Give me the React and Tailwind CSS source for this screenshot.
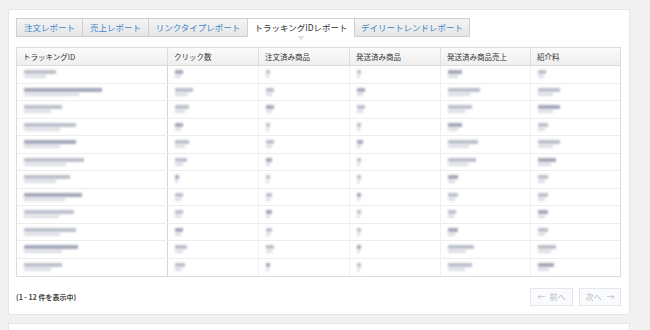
import React from 'react';

const tabs = [
  { label: '注文レポート', w: 'w-[67px]' },
  { label: '売上レポート', w: 'w-[67px]' },
  { label: 'リンクタイプレポート', w: 'w-[100px]' },
  { label: 'トラッキングIDレポート', w: 'w-[108px]', active: true },
  { label: 'デイリートレンドレポート', w: 'w-[116px]' },
];

const columns = ['トラッキングID', 'クリック数', '注文済み商品', '発送済み商品', '発送済み商品売上', '紹介料'];

// blurred widths for each row, one per column
const rows = [
  [32, 8, 4, 4, 14, 8],
  [78, 18, 8, 8, 32, 22],
  [38, 14, 8, 8, 24, 22],
  [52, 8, 4, 4, 14, 10],
  [52, 14, 8, 6, 30, 22],
  [60, 12, 6, 4, 28, 18],
  [46, 4, 4, 4, 10, 10],
  [58, 8, 6, 4, 10, 10],
  [50, 8, 6, 4, 8, 10],
  [52, 8, 6, 4, 10, 10],
  [54, 12, 8, 4, 26, 18],
  [38, 10, 4, 4, 24, 16],
];

const Smudge = ({ w, dark }) => (
  <div className="flex flex-col gap-[1px] blur-[1px]">
    <div
      className={dark ? 'h-[4px] bg-[#a3a7b8]' : 'h-[4px] bg-[#bcc0cb]'}
      style={{ width: w }}
    />
    <div className="h-[3px] bg-[#dcdee5]" style={{ width: Math.max(3, w * 0.7) }} />
  </div>
);

const App = () => {
  return (
    <div
      className="w-[650px] h-[330px] bg-[#f1f1f1] overflow-hidden pt-[9px] pl-[8px]"
      style={{ fontFamily: '"Noto Sans CJK JP", "Liberation Sans", sans-serif' }}
    >
      <div className="w-[622px] h-[306px] bg-white border border-[#e6e6e6] pt-[8px] px-[7px]">
        <div className="flex h-[19px]">
          {tabs.map((t) => (
            <div
              key={t.label}
              className={
                'relative flex items-center justify-center border border-[#cfcfcf] -ml-[1px] first:ml-0 text-[8.5px] leading-none ' +
                t.w +
                (t.active
                  ? ' bg-white text-[#333] border-b-white'
                  : ' bg-gradient-to-b from-[#f4f4f4] to-[#e6e6e6] text-[#3d86c9]')
              }
            >
              {t.label}
              {t.active && (
                <div className="absolute left-1/2 -bottom-[4px] -ml-[4px] w-0 h-0 border-l-[4px] border-r-[4px] border-t-[4px] border-l-transparent border-r-transparent border-t-[#e2e2e2]" />
              )}
            </div>
          ))}
        </div>

        <div className="mt-[10px] w-[605px] border border-[#dcdcdc]">
          <div className="grid grid-cols-[150px_91px_91px_91px_90px_91px] h-[18px] bg-gradient-to-b from-[#fafafa] to-[#efefef] border-b border-[#dcdcdc]">
            {columns.map((c, i) => (
              <div
                key={c}
                className={
                  'flex items-center pl-[6px] text-[7.5px] text-[#333] ' +
                  (i > 0 ? 'border-l border-[#dedede]' : '')
                }
              >
                {c}
              </div>
            ))}
          </div>
          {rows.map((r, ri) => (
            <div
              key={ri}
              className={
                'grid grid-cols-[150px_91px_91px_91px_90px_91px] h-[17.5px] ' +
                (ri < rows.length - 1 ? 'border-b border-[#eeeeee]' : '')
              }
            >
              {r.map((w, ci) => (
                <div
                  key={ci}
                  className={
                    'flex items-center pl-[7px] ' +
                    (ci === 1 ? 'border-l border-[#d6d6d6]' : ci > 0 ? 'border-l border-[#f0f0f0]' : '')
                  }
                >
                  <Smudge w={w} dark={(ri + ci) % 3 === 1} />
                </div>
              ))}
            </div>
          ))}
        </div>

        <div className="flex items-center justify-between mt-[11px] w-[605px]">
          <div className="text-[7px] font-bold text-[#444] mt-[1px]">(1 - 12 件を表示中)</div>
          <div className="flex gap-[6px]">
            <div className="w-[43px] h-[18px] flex items-center justify-center gap-[4px] border border-[#e4e6ea] bg-[#fafbfc] text-[8px] text-[#b5b9c0]">
              <span>←</span>
              <span>前へ</span>
            </div>
            <div className="w-[42px] h-[18px] flex items-center justify-center gap-[5px] border border-[#e4e6ea] bg-[#fafbfc] text-[8px] text-[#b5b9c0]">
              <span>次へ</span>
              <span>→</span>
            </div>
          </div>
        </div>
      </div>
      <div className="w-[622px] h-[20px] mt-[8px] bg-white border border-[#e6e6e6]" />
    </div>
  );
};

export default App;
